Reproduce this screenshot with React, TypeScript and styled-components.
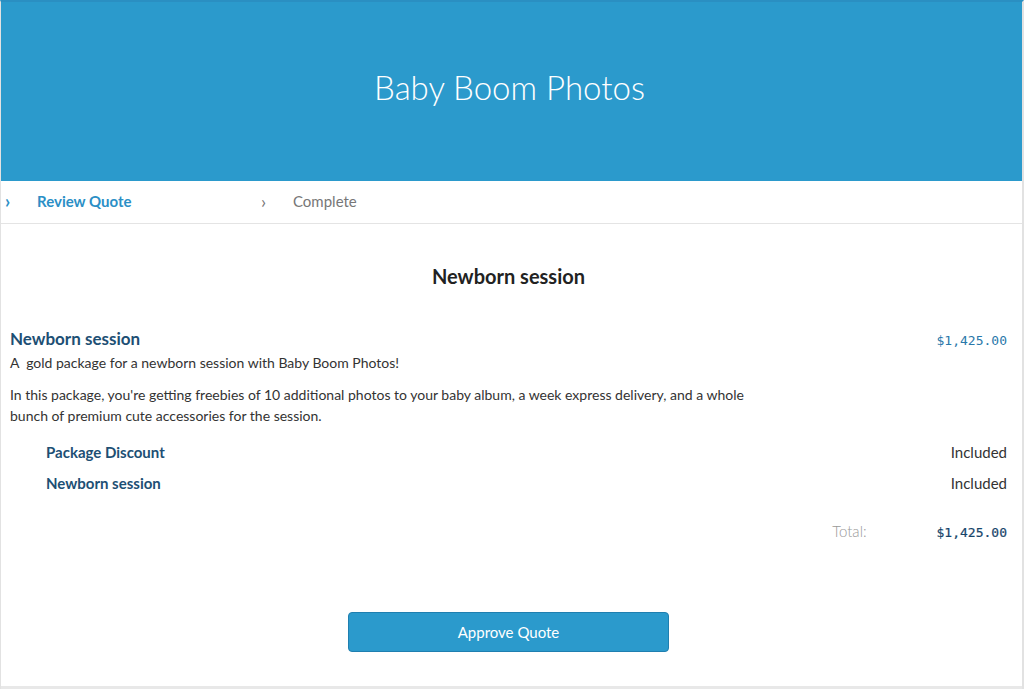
import React from 'react'
import styled, { createGlobalStyle } from 'styled-components'

const GlobalStyle = createGlobalStyle`
  body {
    margin: 0;
    font-family: Lato, "Open Sans", sans-serif;
    color: #333;
    background: #fff;
  }
`

const Page = styled.div`
  height: 687px;
  border: 1px solid #e2e2e2;
  border-top: 2px solid #2a8fc2;
  border-right-width: 2px;
  display: flex;
  flex-direction: column;
`

const Header = styled.header`
  height: 179px;
  box-sizing: border-box;
  padding: 0 4px 10px 0;
  background: #2b9acc;
  display: flex;
  align-items: center;
  justify-content: center;
`

const Title = styled.h1`
  margin: 0;
  color: #fff;
  font-weight: 300;
  font-size: 33px;
`

const Steps = styled.nav`
  display: grid;
  grid-template-columns: repeat(4, 256px);
  height: 43px;
  box-sizing: border-box;
  padding-bottom: 3px;
  border-bottom: 1px solid #e4e4e4;
  align-items: center;
`

const Step = styled.div<{ $active?: boolean }>`
  display: flex;
  align-items: center;
  gap: 20px;
  padding-left: 4px;
  font-size: 15px;
  font-weight: ${p => (p.$active ? 700 : 400)};
  color: ${p => (p.$active ? '#2b8fc6' : '#777')};
`

const Chevron = styled.span<{ $active?: boolean }>`
  font-size: 18px;
  width: 12px;
  color: ${p => (p.$active ? '#2b8fc6' : '#777')};
`

const Body = styled.main`
  flex: 1;
  padding: 0 15px 0 9px;
  display: flex;
  flex-direction: column;
`

const Heading = styled.h2`
  margin: 40px 0 40px;
  text-align: center;
  font-size: 20px;
  font-weight: 700;
  color: #222;
`

const ItemRow = styled.div`
  display: flex;
  justify-content: space-between;
  align-items: baseline;
`

const ItemTitle = styled.h3`
  margin: 0;
  font-size: 17px;
  font-weight: 700;
  color: #1d4f74;
`

const Price = styled.span<{ $strong?: boolean }>`
  font-family: "DejaVu Sans Mono", "Liberation Mono", monospace;
  font-size: 13px;
  color: ${p => (p.$strong ? '#17456a' : '#2a78aa')};
  -webkit-text-stroke: ${p => (p.$strong ? '0.2px #17456a' : '0')};
`

const Text = styled.p<{ $gap?: number }>`
  margin: ${p => p.$gap ?? 0}px 0 0;
  max-width: 755px;
  font-size: 14px;
  line-height: 21px;
  color: #333;
`

const SubList = styled.div`
  margin-top: 16px;
  display: flex;
  flex-direction: column;
  gap: 10px;
`

const SubRow = styled.div`
  display: flex;
  justify-content: space-between;
  padding-left: 36px;
  font-size: 15px;
  line-height: 21px;
`

const SubName = styled.span`
  font-weight: 700;
  color: #1d4f74;
`

const SubValue = styled.span`
  color: #333;
`

const TotalRow = styled.div`
  margin-top: 28px;
  display: flex;
  justify-content: flex-end;
  align-items: baseline;
  gap: 70px;
`

const TotalLabel = styled.span`
  font-size: 15px;
  font-weight: 300;
  color: #999;
`

const Actions = styled.div`
  margin-top: 72px;
  display: flex;
  justify-content: center;
`

const ApproveButton = styled.button`
  width: 321px;
  height: 40px;
  background: #2b9acc;
  border: 1px solid #1f7fb0;
  border-radius: 4px;
  color: #fff;
  font-family: Lato, "Open Sans", sans-serif;
  font-size: 15px;
  cursor: pointer;
  &:hover {
    opacity: 0.9;
  }
`

const Footer = styled.div`
  height: 3px;
  background: #e8e8e8;
`

const subItems = ['Package Discount', 'Newborn session']

const App = () => {
  return (
    <>
      <GlobalStyle />
      <Page>
        <Header>
          <Title>Baby Boom Photos</Title>
        </Header>
        <Steps>
          <Step $active>
            <Chevron $active>›</Chevron>
            Review Quote
          </Step>
          <Step>
            <Chevron>›</Chevron>
            Complete
          </Step>
        </Steps>
        <Body>
          <Heading>Newborn session</Heading>
          <ItemRow>
            <ItemTitle>Newborn session</ItemTitle>
            <Price>$1,425.00</Price>
          </ItemRow>
          <Text $gap={3}>A&nbsp; gold package for a newborn session with Baby Boom Photos!</Text>
          <Text $gap={11}>
            In this package, you're getting freebies of 10 additional photos to your baby album, a week express
            delivery, and a whole bunch of premium cute accessories for the session.
          </Text>
          <SubList>
            {subItems.map(name => (
              <SubRow key={name}>
                <SubName>{name}</SubName>
                <SubValue>Included</SubValue>
              </SubRow>
            ))}
          </SubList>
          <TotalRow>
            <TotalLabel>Total:</TotalLabel>
            <Price $strong>$1,425.00</Price>
          </TotalRow>
          <Actions>
            <ApproveButton>Approve Quote</ApproveButton>
          </Actions>
        </Body>
        <Footer />
      </Page>
    </>
  )
}

export default App
